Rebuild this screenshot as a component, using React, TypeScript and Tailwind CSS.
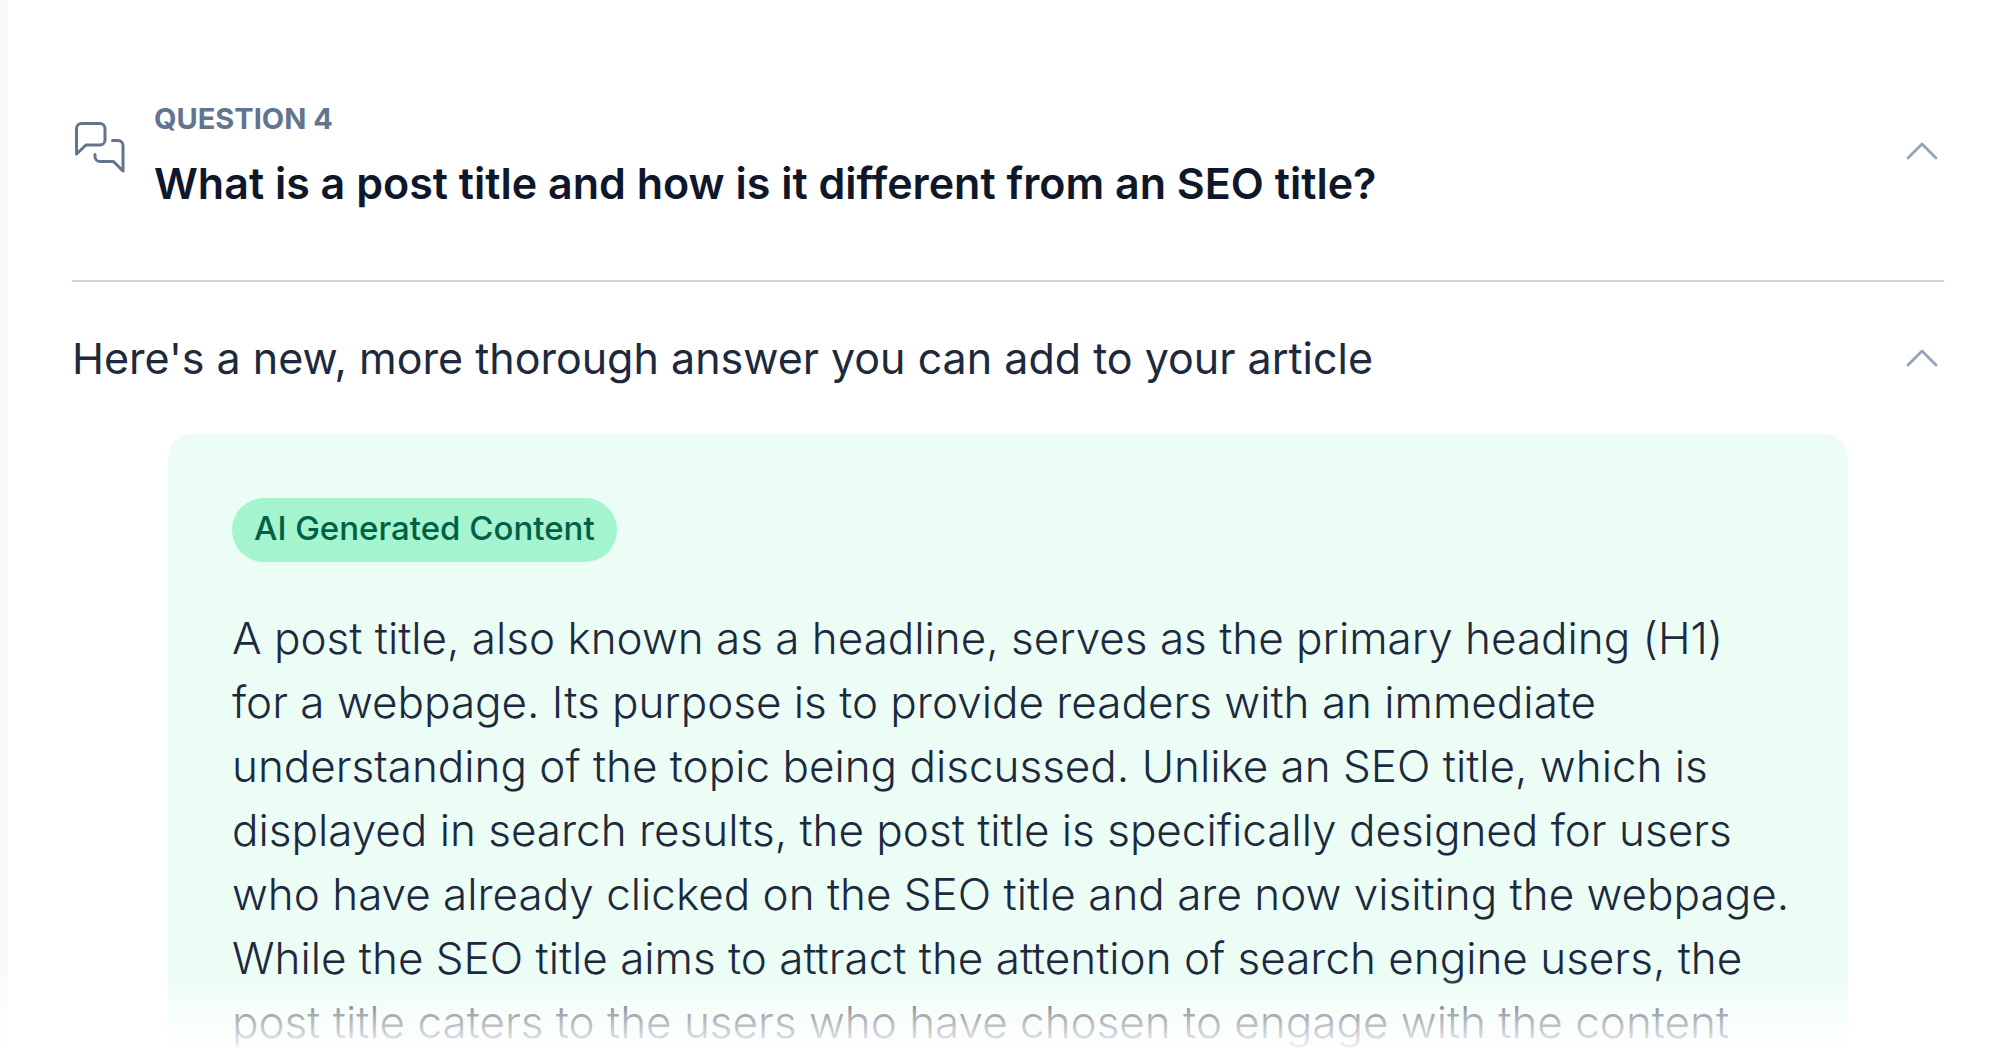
import React from "react";

function Chevron() {
  return (
    <svg viewBox="0 0 32 18" className="mr-1.5 h-[18px] w-8 shrink-0" fill="none" stroke="#94a3b8" strokeWidth="2.8" strokeLinecap="round" strokeLinejoin="round" aria-hidden="true">
      <path d="M2 16 L16 2 L30 16" />
    </svg>
  );
}

function ChatIcon() {
  return (
    <svg viewBox="0 0 54 54" className="-mt-4 size-[54px] shrink-0" fill="none" stroke="#64748b" strokeWidth="3" strokeLinecap="round" strokeLinejoin="round" aria-hidden="true">
      <path d="M4.5 34V8.500a5 5 0 0 1 5-5h18.500a5 5 0 0 1 5 5V20a5 5 0 0 1-5 5H14z" />
      <path d="M40.500 20.500H46a5 5 0 0 1 5 5V51L41.500 41.500H28a5 5 0 0 1-5-5V34.500" />
    </svg>
  );
}

export default function App() {
  return (
    <div className="relative flex h-screen overflow-hidden bg-white font-['Inter',sans-serif] text-slate-800 [font-variant-ligatures:none]">
      <div className="w-2 shrink-0 bg-slate-50" />
      <main className="min-w-0 flex-1 pl-16 pr-14 pt-[99px]">
        <button type="button" aria-expanded="true" className="flex w-full items-center gap-7 text-left">
          <ChatIcon />
          <span className="flex-1">
            <span className="block text-[29px] leading-10 font-bold text-slate-500">QUESTION 4</span>
            <span className="mt-4 block text-[43px] leading-[56px] font-semibold text-slate-900">What is a post title and how is it different from an SEO title?</span>
          </span>
          <span className="-mt-2 flex"><Chevron /></span>
        </button>
        <hr className="mt-[69px] border-t-2 border-slate-300" />
        <button type="button" aria-expanded="true" className="mt-12 flex w-full items-center justify-between text-left text-[43px] leading-[56px]">
          Here's a new, more thorough answer you can add to your article
          <Chevron />
        </button>
        <section className="mx-24 mt-12 rounded-t-3xl bg-emerald-50 px-16 pt-16">
          <span className="block w-fit rounded-full bg-emerald-200 px-[22px] pb-1 text-[33px] leading-[60px] font-medium text-emerald-800">AI Generated Content</span>
          <p className="mt-11 text-[44px] leading-[64px] font-light whitespace-nowrap">
            A post title, also known as a headline, serves as the primary heading (H1)<br />
            for a webpage. Its purpose is to provide readers with an immediate<br />
            understanding of the topic being discussed. Unlike an SEO title, which is<br />
            displayed in search results, the post title is specifically designed for users<br />
            who have already clicked on the SEO title and are now visiting the webpage.<br />
            While the SEO title aims to attract the attention of search engine users, the<br />
            post title caters to the users who have chosen to engage with the content
          </p>
        </section>
      </main>
      <div className="pointer-events-none absolute inset-x-0 bottom-0 h-20 bg-linear-to-b from-transparent via-white/60 to-white" />
    </div>
  );
}
